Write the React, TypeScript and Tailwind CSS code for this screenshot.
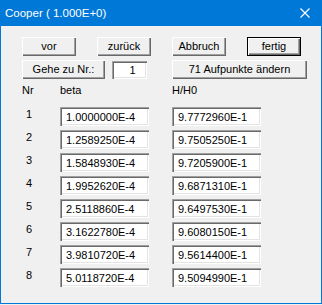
const rows = [
  ["1.0000000E-4", "9.7772960E-1"],
  ["1.2589250E-4", "9.7505250E-1"],
  ["1.5848930E-4", "9.7205900E-1"],
  ["1.9952620E-4", "9.6871310E-1"],
  ["2.5118860E-4", "9.6497530E-1"],
  ["3.1622780E-4", "9.6080150E-1"],
  ["3.9810720E-4", "9.5614400E-1"],
  ["5.0118720E-4", "9.5094990E-1"],
];

const raised =
  "bg-[#f0f0f0] shadow-[inset_1px_1px_0_#ffffff,inset_-1px_-1px_0_#696969,inset_-2px_-2px_0_#a0a0a0] flex items-center justify-center text-black";
const sunken =
  "bg-white shadow-[inset_1px_1px_0_#a0a0a0,inset_2px_2px_0_#696969,inset_-1px_-1px_0_#ffffff,inset_-2px_-2px_0_#e3e3e3] flex items-center pl-[6px] pt-[1px] text-black";

function Btn({ label, className = "" }: { label: string; className?: string }) {
  return <div className={`${raised} h-[19px] ${className}`}>{label}</div>;
}

export default function App() {
  return (
    <div className="w-[322px] h-[305px] bg-[#f0f0f0]">
      <div className="w-[322px] h-[304px] flex flex-col bg-[#f0f0f0] border-x border-b border-[#0078d7] font-['Liberation_Sans',Arial,sans-serif] text-[11px] leading-[13px]">
        <div className="h-[26px] -mx-px bg-[#0078d7] flex items-center justify-between pl-[5px] pr-[12px] text-white text-[11.5px]">
          <span>Cooper ( 1.000E+0)</span>
          <svg width="10" height="10" viewBox="0 0 10 10">
            <path d="M0.5 0.5L9.5 9.5M9.5 0.5L0.5 9.5" stroke="#ffffff" strokeWidth="1.2" />
          </svg>
        </div>

        <div className="flex flex-col pt-[11px] pl-[21px]">
          <div className="flex gap-[21px]">
            <Btn label="vor" className="w-[54px]" />
            <Btn label="zurück" className="w-[54px]" />
            <Btn label="Abbruch" className="w-[54px]" />
            <div className="w-[54px] h-[19px] border border-black">
              <Btn label="fertig" className="w-full h-full" />
            </div>
          </div>

          <div className="flex mt-[4px]">
            <Btn label="Gehe zu Nr.:" className="w-[83px]" />
            <div className={`${sunken} w-[35px] h-[18px] ml-[7px] mt-px justify-center pl-0`}>1</div>
            <Btn label="71 Aufpunkte ändern" className="w-[135px] ml-[25px]" />
          </div>

          <div className="flex mt-[5px] text-black">
            <span className="w-[38px]">Nr</span>
            <span className="w-[112px]">beta</span>
            <span>H/H0</span>
          </div>

          <div className="flex flex-col gap-[4px] mt-[10px]">
            {rows.map(([b, h], i) => (
              <div key={i} className="flex items-start">
                <span className="w-[38px] pl-[4px] pt-[1px] text-black">{i + 1}</span>
                <div className={`${sunken} w-[89px] h-[19px]`}>{b}</div>
                <div className={`${sunken} w-[89px] h-[19px] ml-[23px]`}>{h}</div>
              </div>
            ))}
          </div>
        </div>
      </div>
    </div>
  );
}
